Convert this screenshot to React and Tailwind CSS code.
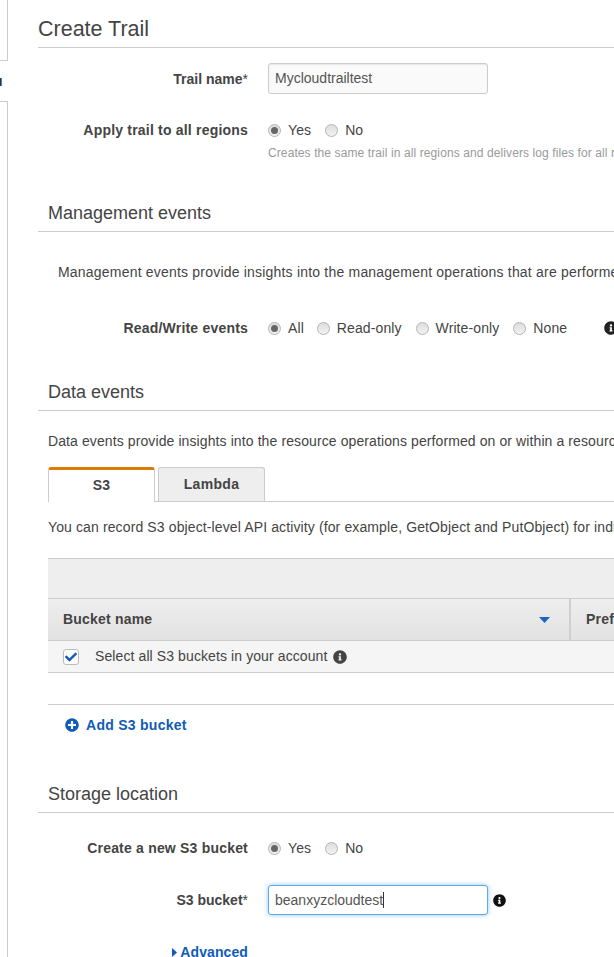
import React from 'react';
import { FaInfoCircle, FaPlusCircle, FaCheck } from 'react-icons/fa';

function Radio({ label, checked }) {
    return (
        <span className="flex items-center">
            <span className="w-[13px] h-[13px] rounded-full border border-[#b4b4b4] bg-gradient-to-b from-[#dddddd] to-[#f2f2f2] flex items-center justify-center shrink-0">
                {checked && <span className="w-[7px] h-[7px] rounded-full bg-[#666666]" />}
            </span>
            <span className="ml-[7px] tracking-[0.1px]">{label}</span>
        </span>
    );
}

function Row({ label, className, children }) {
    return (
        <div className={`flex items-center ${className}`}>
            <div className="w-[210px] shrink-0 text-right font-bold tracking-[0.2px] text-[#444444] leading-5">{label}</div>
            <div className="ml-5 flex items-center">{children}</div>
        </div>
    );
}

function SectionTitle({ children, className }) {
    return (
        <div className={`border-b border-[#cccccc] pl-[10px] text-[18px] leading-[26px] h-[32px] text-[#444444] ${className}`}>
            {children}
        </div>
    );
}

export default function App() {
    return (
        <div className="w-[614px] h-[957px] overflow-hidden bg-white flex font-['Liberation_Sans',Arial,sans-serif] text-[14px] text-[#444444] whitespace-nowrap">
            {/* cut off left nav */}
            <div className="w-[8px] shrink-0">
                <div className="h-[61px] border-r border-b border-[#cccccc]" />
                <div className="h-[40px] flex items-center justify-start text-[14px] font-bold text-[#333333] overflow-hidden">
                    <span className="-ml-[6px]">u</span>
                </div>
                <div className="h-[856px] border-r border-t border-[#cccccc]" />
            </div>

            <div className="ml-[30px] w-[576px] shrink-0">
                <div className="h-[48px] border-b border-[#cccccc] pt-[15px] text-[21.5px] leading-[28px] text-[#444444]">Create Trail</div>

                <Row label={<span className="tracking-normal">Trail name<span className="font-normal">*</span></span>} className="mt-[15px] h-[31px]">
                    <div className="w-[220px] h-[31px] rounded-[3px] border border-[#cccccc] bg-[#fafafa] px-[6px] leading-[28px] text-[#555555] shadow-[inset_0_1px_1px_rgba(0,0,0,0.08)]">
                        Mycloudtrailtest
                    </div>
                </Row>

                <Row label="Apply trail to all regions" className="mt-[26px] h-[20px]">
                    <Radio label="Yes" checked />
                    <span className="ml-[14px]"><Radio label="No" /></span>
                </Row>
                <div className="ml-[230px] mt-[5px] text-[12px] leading-[16px] text-[#999999] tracking-[0.1px]">
                    Creates the same trail in all regions and delivers log files for all regions to the bucket
                </div>

                <SectionTitle className="mt-[39px]">Management events</SectionTitle>
                <div className="mt-[30px] ml-5 leading-5 tracking-[0.2px]">
                    Management events provide insights into the management operations that are performed on resources
                </div>

                <Row label="Read/Write events" className="mt-[36px] h-[20px]">
                    <Radio label="All" checked />
                    <span className="ml-[13px]"><Radio label="Read-only" /></span>
                    <span className="ml-[14px]"><Radio label="Write-only" /></span>
                    <span className="ml-[14px]"><Radio label="None" /></span>
                    <FaInfoCircle className="ml-[37px] w-[14px] h-[14px] text-[#222222] shrink-0" />
                </Row>

                <SectionTitle className="mt-[41px]">Data events</SectionTitle>

                <div className="mt-[20px] ml-[10px] leading-5 tracking-[0.1px]">
                    Data events provide insights into the resource operations performed on or within a resource
                </div>

                {/* tabs */}
                <div className="mt-[16px] ml-[10px] h-[35px] flex items-end border-b border-[#cccccc] font-bold tracking-[0.3px]">
                    <div className="w-[107px] h-[35px] -mb-px pb-[2px] bg-white border-x border-[#cccccc] border-t-[3px] border-t-[#dd7b00] rounded-t-[3px] flex items-center justify-center text-[#444444]">S3</div>
                    <div className="ml-[3px] w-[107px] h-[34px] bg-[#eeeeee] border-x border-t border-[#cccccc] rounded-t-[3px] flex items-center justify-center text-[#444444]">Lambda</div>
                </div>

                <div className="mt-[15px] ml-[10px] leading-5 tracking-[0.12px]">
                    You can record S3 object-level API activity (for example, GetObject and PutObject) for individual buckets
                </div>

                {/* table */}
                <div className="mt-[21px] ml-[10px]">
                    <div className="h-[40px] bg-[#eeeeee] border-t border-[#cccccc]" />
                    <div className="h-[43px] flex border-y border-[#cccccc] bg-gradient-to-b from-[#eeeeee] to-[#e2e2e2] font-bold tracking-[0.2px]">
                        <div className="w-[523px] shrink-0 pl-[15px] pr-[19px] flex items-center justify-between border-r-2 border-[#cfcfcf]">
                            <span>Bucket name</span>
                            <svg width="11" height="6" viewBox="0 0 11 6"><path d="M0 0h11L5.5 6z" fill="#1a66c2" /></svg>
                        </div>
                        <div className="pl-[15px] flex items-center">Prefix</div>
                    </div>
                    <div className="h-[32px] flex items-center border-b border-[#cccccc] bg-[#f5f5f5] pl-[15px]">
                        <span className="w-[16px] h-[16px] rounded-[3px] border border-[#bbbbbb] bg-white flex items-center justify-center shrink-0">
                            <FaCheck className="w-[12px] h-[12px] text-[#105cb6]" />
                        </span>
                        <span className="ml-[16px] tracking-[0.1px]">Select all S3 buckets in your account</span>
                        <FaInfoCircle className="ml-[5px] w-[14px] h-[14px] text-[#444444] shrink-0" />
                    </div>
                </div>

                <div className="mt-[31px] ml-[10px] h-[41px] border-t border-[#cccccc] pl-[17px] flex items-center font-bold tracking-[0.27px] text-[#105cb6]">
                    <FaPlusCircle className="w-[14px] h-[14px] shrink-0" />
                    <span className="ml-[7px]">Add S3 bucket</span>
                </div>

                <SectionTitle className="mt-[36px]">Storage location</SectionTitle>

                <Row label="Create a new S3 bucket" className="mt-[25px] h-[20px]">
                    <Radio label="Yes" checked />
                    <span className="ml-[14px]"><Radio label="No" /></span>
                </Row>

                <Row label={<span className="tracking-normal">S3 bucket<span className="font-normal">*</span></span>} className="mt-[27px] h-[30px]">
                    <div className="w-[220px] h-[30px] rounded-[3px] border border-[#5ea8e8] bg-white px-[6px] leading-[28px] text-[#555555] shadow-[0_0_5px_rgba(80,160,235,0.6)] flex items-center">
                        <span>beanxyzcloudtest</span>
                        <span className="w-px h-[16px] bg-[#333333]" />
                    </div>
                    <FaInfoCircle className="ml-[5px] w-[13px] h-[13px] text-[#111111] shrink-0" />
                </Row>

                <div className="mt-[27px] w-[210px] h-[20px] flex items-center justify-end font-bold tracking-[0.1px] text-[#105cb6]">
                    <svg width="5" height="9" viewBox="0 0 5 9" className="mr-[3px]"><path d="M0 0l5 4.5L0 9z" fill="#105cb6" /></svg>
                    <span>Advanced</span>
                </div>
            </div>
        </div>
    );
}
